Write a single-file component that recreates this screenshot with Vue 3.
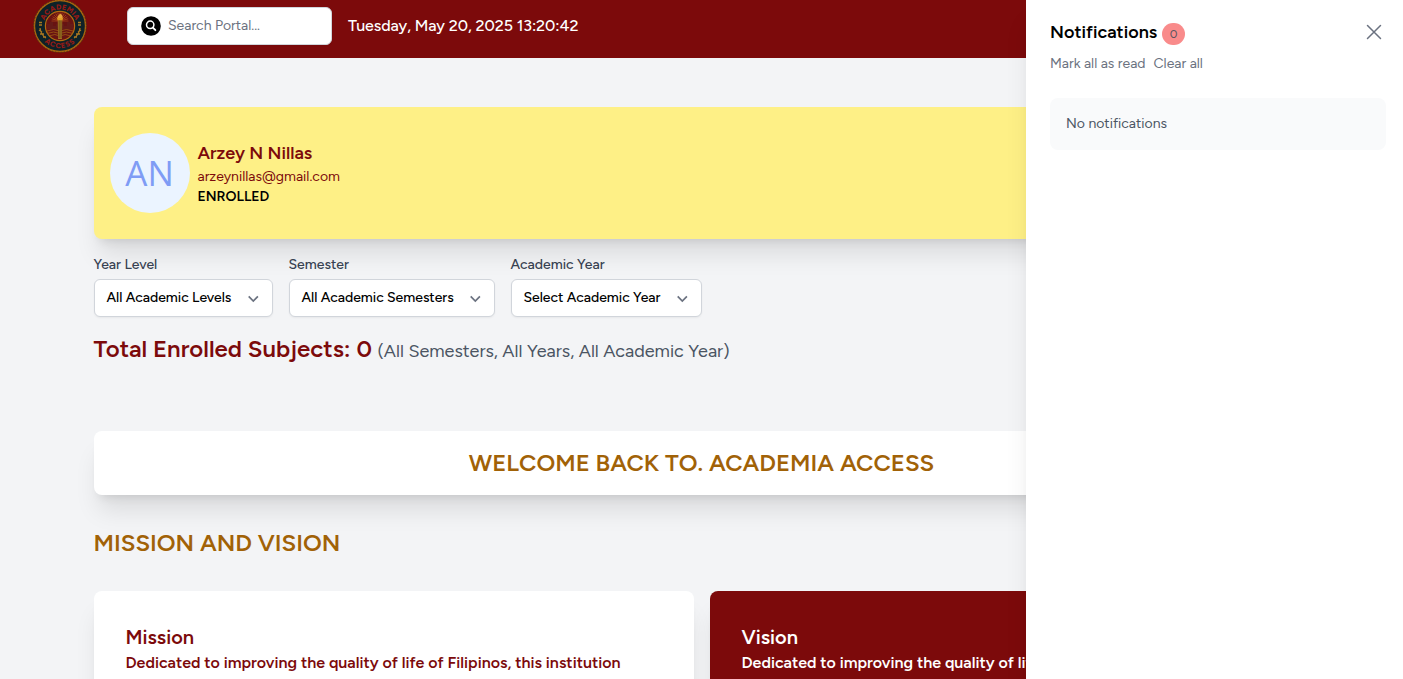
<script setup>
const filters = [
  { label: 'Year Level', value: 'All Academic Levels', id: 'level' },
  { label: 'Semester', value: 'All Academic Semesters', id: 'semester' },
  { label: 'Academic Year', value: 'Select Academic Year', id: 'year' },
]
const rays = Array.from({ length: 13 }, (_, i) => i * 15 - 90)
</script>

<template>
  <div class="page">
    <header class="topbar">
      <svg class="logo" viewBox="0 0 54 54">
        <defs>
          <path id="arcTop" d="M10.6 27a16.4 16.4 0 0 1 32.8 0" />
          <path id="arcBottom" d="M4.8 27a22.2 22.2 0 0 0 44.4 0" />
        </defs>
        <circle cx="27" cy="27" r="25.6" fill="#0d2228" stroke="#a9650f" stroke-width="1.5" />
        <circle cx="27" cy="27" r="26.4" fill="none" stroke="#4b3715" stroke-width="1" stroke-dasharray="1.500 1.500" />
        <circle cx="27" cy="27" r="14.6" fill="#681312" stroke="#b26c12" stroke-width="1.2" />
        <g stroke="#b04a1a" stroke-width=".7">
          <line v-for="r in rays" :key="r" x1="27" y1="22" x2="27" y2="13.500" :transform="`rotate(${r} 27 22)`" />
        </g>
        <path d="M14 30v-5h3v-2h3v4h3v-2h8v2h3v-4h3v2h3v5z" fill="#651b18" />
        <path d="M14 32q6.500-3 13 0q6.500-3 13 0M14 34.500q6.500-3 13 0q6.500-3 13 0M16 37q6-3 11 0q5-3 11 0" fill="none" stroke="#9d5d13" stroke-width=".8" />
        <path d="M24.700 20h4.600l-.4 20h-3.800z" fill="#a37220" />
        <path d="M26.200 21v18M28 21v18" stroke="#4c3516" stroke-width=".6" />
        <path d="M23.700 18.500h6.600l-1 2.700h-4.600z" fill="#df9e26" />
        <path d="M27 14.500c3 2 3 3 2 4.500h-4c-1-2 1-2.500 2-4.500z" fill="#e9a83c" />
        <path d="M7 29q1 7 6 10M6 31l3 2M7 35l4 0M10 38l3 0M47 29q-1 7-6 10M48 31l-3 2M47 35h-4M44 38h-3M6 23.500h3M6 26h3M45 23.500h3M45 26h3" fill="none" stroke="#a97720" stroke-width="1.3" />
        <text class="seal"><textPath href="#arcTop" startOffset="50%" text-anchor="middle">ACADEMIA</textPath></text>
        <text class="seal low"><textPath href="#arcBottom" startOffset="50%" text-anchor="middle">ACCESS</textPath></text>
      </svg>
      <div class="search">
        <svg viewBox="0 0 20 20" width="20" height="20">
          <circle cx="10" cy="10" r="9.8" />
          <circle cx="9.200" cy="8.800" r="3.700" fill="none" stroke="#fff" stroke-width="1.5" />
          <path d="m11.900 11.600 2.500 2.600" stroke="#fff" stroke-width="1.8" stroke-linecap="round" />
        </svg>
        <span class="placeholder">Search Portal...</span>
      </div>
      <span class="clock">Tuesday, May 20, 2025 13:20:42</span>
    </header>

    <main>
      <section class="profile">
        <div class="avatar"><span>AN</span></div>
        <div class="who">
          <div class="name"><span>Arzey N Nillas</span></div>
          <div class="email"><span>arzeynillas@gmail.com</span></div>
          <div class="status"><span>ENROLLED</span></div>
        </div>
      </section>

      <section class="filters">
        <div v-for="f in filters" :key="f.id" class="filter" :class="f.id">
          <div class="label">{{ f.label }}</div>
          <div class="select">
            <span>{{ f.value }}</span>
            <svg viewBox="0 0 20 20" width="20" height="20">
              <path d="m5.700 7.400 4.600 4.600 4.600-4.600" fill="none" stroke="#6b7280" stroke-width="1.7" />
            </svg>
          </div>
        </div>
      </section>

      <h2 class="total"><span class="count">Total Enrolled Subjects: 0</span><span class="scope">(All Semesters, All Years, All Academic Year)</span></h2>
      <div class="welcome"><span>WELCOME BACK TO. ACADEMIA ACCESS</span></div>
      <h2 class="section-title">MISSION AND VISION</h2>
      <section class="cards">
        <article class="card">
          <h3>Mission</h3>
          <p>Dedicated to improving the quality of life of Filipinos, this institution</p>
        </article>
        <article class="card dark">
          <h3>Vision</h3>
          <p>Dedicated to improving the quality of life of Filipinos, this institution</p>
        </article>
      </section>
    </main>

    <aside class="drawer">
      <div class="drawer-head">
        <h2>Notifications</h2>
        <span class="badge">0</span>
        <svg class="close" viewBox="0 0 24 24" width="24" height="24">
          <path d="M5.500 5.500l13 13M18.500 5.500l-13 13" stroke="#6b7280" stroke-width="1.5" stroke-linecap="round" />
        </svg>
      </div>
      <div class="actions"><span class="mark">Mark all as read</span><span class="clear">Clear all</span></div>
      <div class="empty"><span>No notifications</span></div>
    </aside>
  </div>
</template>

<style>
body { margin: 0; overflow: hidden; }
</style>

<style scoped>
* { box-sizing: border-box; margin: 0; }
.page { position: relative; width: 1403px; height: 679px; overflow: hidden; background: #f3f4f6; font-family: Figtree, Lato, "Liberation Sans", sans-serif; white-space: nowrap; font-size: 14px; line-height: 20px; }
.topbar { height: 58px; background: #7c0a0b; display: flex; align-items: flex-start; padding-left: 33px; }
.logo { width: 54px; height: 54px; margin-top: -1px; flex: none; }
.seal { font-size: 7.4px; font-weight: 800; fill: #941a16; letter-spacing: .1px; }
.low { letter-spacing: .9px; }
.search { width: 205px; height: 38px; margin: 7px 0 0 40px; background: #fff; border: 1px solid #d1d5db; border-radius: 6px; display: flex; align-items: center; padding-left: 13px; gap: 7px; box-shadow: 0 1px 2px rgba(0,0,0,.05); }
.placeholder { color: #6b7280; font-size: 14px; }
.clock { color: #fff; font-size: 16px; font-weight: 500; letter-spacing: -.06px; line-height: 24px; margin: 14px 0 0 16px; }
main { padding: 49px 93.5px 0; }
.profile { height: 132px; background: #fef086; border-radius: 8px; display: flex; align-items: center; padding-left: 16px; box-shadow: 0 20px 25px -5px rgba(0,0,0,.1), 0 8px 10px -6px rgba(0,0,0,.1); }
.avatar { width: 80px; height: 80px; border-radius: 50%; background: #ebf4ff; color: #7f9cf5; display: grid; place-items: center; font-family: "Open Sans", "Noto Sans", sans-serif; font-size: 35px; font-weight: 400; }
.who { margin-left: 8px; color: #7c0a0b; }
.name { font-size: 18px; line-height: 28px; font-weight: 600; margin-top: -1px; }
.status { color: #000; font-weight: 600; }
.filters { display: flex; gap: 16px; margin-top: 16px; }
.label { color: #374151; font-weight: 500; height: 24px; }
.select { height: 38px; border: 1px solid #d1d5db; border-radius: 6px; background: #fff; display: flex; align-items: center; justify-content: space-between; padding: 0 9px 1px 12px; box-shadow: 0 1px 2px rgba(0,0,0,.05); font-weight: 500; letter-spacing: -.03px; }
.select svg { position: relative; top: 1px; }
.level .select { width: 179px; }
.semester .select { width: 206px; }
.year .select { width: 191px; }
.total { margin-top: 16px; height: 32px; line-height: 32px; display: flex; align-items: baseline; }
.count { color: #7c0a0b; font-size: 24px; font-weight: 600; width: 284px; }
.scope { color: #4b5563; font-size: 18px; font-weight: 400; }
.welcome { height: 64px; margin-top: 66px; background: #fff; border-radius: 8px; display: grid; place-items: center; color: #a16207; font-size: 24px; font-weight: 600; box-shadow: 0 20px 25px -5px rgba(0,0,0,.1), 0 8px 10px -6px rgba(0,0,0,.1); }
.section-title { color: #a16207; font-size: 24px; line-height: 32px; font-weight: 600; margin-top: 32px; }
.cards { display: grid; grid-template-columns: 1fr 1fr; gap: 16px; margin-top: 32px; }
.card { background: #fff; color: #7c0a0b; height: 180px; padding: 32px; border-radius: 8px; box-shadow: 0 20px 25px -5px rgba(0,0,0,.1), 0 8px 10px -6px rgba(0,0,0,.1); }
.dark { background: #7c0a0b; color: #fff; }
h3 { font-size: 20px; line-height: 28px; font-weight: 600; }
.card p { font-size: 16px; line-height: 24px; font-weight: 600; }
.drawer { position: absolute; top: 0; right: 0; width: 377px; height: 679px; background: #fff; padding: 18px 17px 0 24px; box-shadow: 0 20px 25px -5px rgba(0,0,0,.1), 0 8px 10px -6px rgba(0,0,0,.1); }
.drawer-head { height: 28px; display: flex; align-items: center; }
.drawer-head h2 { font-size: 18px; font-weight: 600; line-height: 28px; width: 112px; }
.badge { width: 23px; height: 22px; border-radius: 11px; background: #f98b8b; color: #5b5560; font-size: 12px; line-height: 22px; text-align: center; margin-top: 4px; }
.close { margin-left: auto; }
.actions { color: #6b7280; margin-top: 8px; display: flex; }
.mark { width: 103.5px; }
.empty { margin-top: 24px; height: 52px; border-radius: 8px; background: #f9fafb; color: #4b5563; padding: 16px; }
</style>
